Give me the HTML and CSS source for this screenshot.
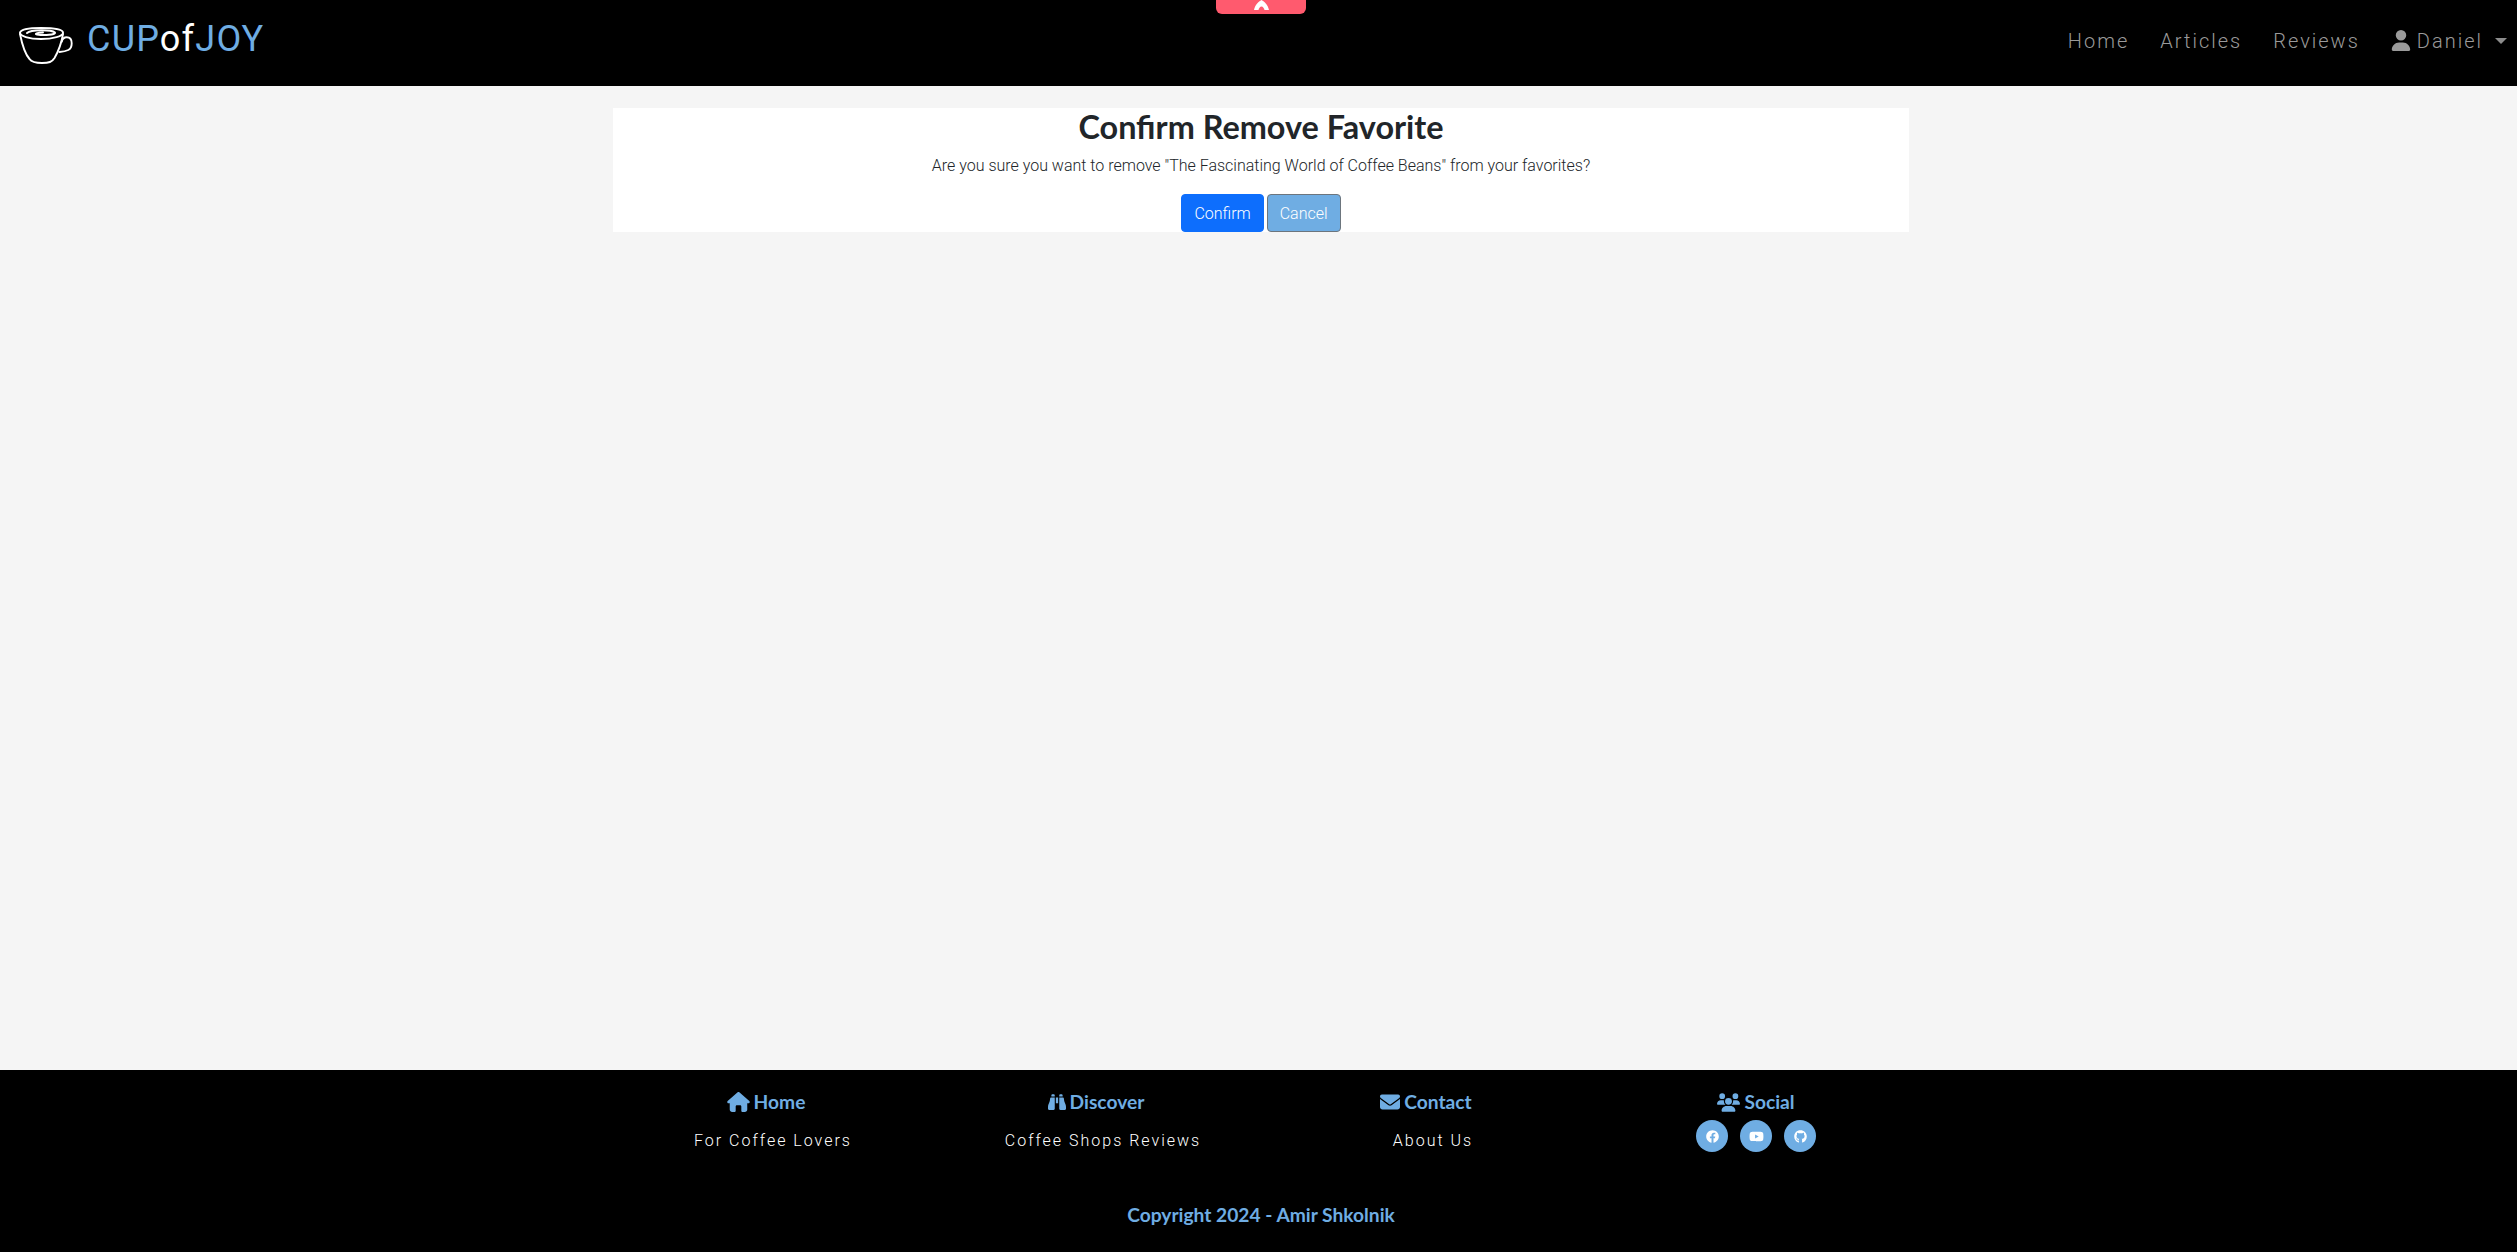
FILE: index.html
```html
<!doctype html>
<html lang="en">
<head>
  <meta charset="utf-8">
  <title>Confirm Remove Favorite</title>
  <link rel="stylesheet" href="styles.css">
</head>

<body>
  <!-- Top navigation -->
  <header class="navbar">
    <a class="brand" href="#">
      <svg class="brand-cup" viewBox="0 0 54 37" width="54" height="37" fill="none" stroke="#fff" stroke-width="1.9" stroke-linecap="round" stroke-linejoin="round">
        <path d="M1 5.500C2 2 12 1 22 1C33 1 43.500 2 44 5.500C44.300 9 34 12 22 12C10 12 .5 9 1 5.500Z"/>
        <path d="M8 6C12 2.500 32 2.500 36 5.500C37 8 25 8.500 18 7.500C15 7 18 5.500 24 5.500"/>
        <path d="M1 7C3 17 6 27 10.500 32C12.500 35 16 36 23 36C30 36 33 35 35.500 31C39 25 42.500 16 44 7"/>
        <path d="M42.700 14.700C43.500 11.500 45.500 10.300 47.700 10.300C51 10.300 52.700 13 52.700 16.300C52.700 19.500 51.500 22 49.300 23C46.500 24.300 43.500 24.700 40.500 25"/>
      </svg>
      <span class="brand-text"><span class="blue">CUP</span>of<span class="blue">JOY</span></span>
    </a>

    <nav class="nav-links">
      <a href="#">Home</a>
      <a href="#">Articles</a>
      <a href="#">Reviews</a>
      <a class="nav-user" href="#">
        <svg viewBox="0 0 448 512" width="20" height="21" fill="currentColor"><path d="M224 256a128 128 0 1 0 0-256 128 128 0 1 0 0 256zm-45.700 48C79.800 304 0 383.800 0 482.300 0 498.700 13.300 512 29.700 512h388.600c16.400 0 29.700-13.300 29.700-29.700C448 383.800 368.200 304 269.700 304h-91.400z"/></svg>
        Daniel
        <span class="caret"></span>
      </a>
    </nav>

    <div class="top-tab">
      <svg viewBox="0 0 15 10" width="15" height="10" fill="#fff"><path d="M7.500 0C10.500 1.500 14 5 15 10H10.500C10.200 8.500 9 6.500 7.500 6.500C6 6.500 4.800 8.500 4.500 10H0C1 5 4.500 1.500 7.500 0Z"/></svg>
    </div>
  </header>

  <main class="content">
    <section class="confirm-box">
      <h2>Confirm Remove Favorite</h2>
      <p>Are you sure you want to remove "The Fascinating World of Coffee Beans" from your favorites?</p>
      <div class="confirm-buttons">
        <button class="btn btn-confirm" type="button">Confirm</button>
        <button class="btn btn-cancel" type="button">Cancel</button>
      </div>
    </section>
  </main>

  <footer class="footer">
    <div class="footer-cols">
      <div class="footer-col">
        <h5>
          <svg viewBox="0 0 576 512" width="23" height="20" fill="currentColor"><path d="M575.800 255.500c0 18-15 32.100-32 32.100h-32l.7 160.200c0 35.300-28.700 64.200-64 64.200H392c-17.700 0-32-14.300-32-32V368c0-17.700-14.300-32-32-32h-80c-17.700 0-32 14.300-32 32v112c0 17.700-14.300 32-32 32h-56.200c-35.300 0-64-28.700-64-64V287.600H32c-18 0-32-14-32-32.100 0-9 3-17 10-24L266.400 8c7-7 15-8 22-8s15 2 21 7l255.400 224.500c8 7 12 15 11 24z"/></svg>
          Home
        </h5>
        <a class="footer-link" href="#">For Coffee Lovers</a>
      </div>
      <div class="footer-col">
        <h5>
          <svg viewBox="0 0 512 512" width="18" height="18" fill="currentColor"><path d="M128 32h32c17.700 0 32 14.300 32 32v32H96V64c0-17.700 14.300-32 32-32zm64 96v320c0 17.700-14.300 32-32 32H32c-17.700 0-32-14.300-32-32v-59.100c0-34.600 9.400-68.600 27.200-98.300C40.900 267.800 49.700 242.400 53 216L60.500 156c2-16 15.600-28 31.800-28H192zm227.800 0c16.100 0 29.800 12 31.800 28L459 216c3.300 26.400 12.100 51.800 25.800 74.600 17.800 29.700 27.200 63.700 27.200 98.300V448c0 17.700-14.300 32-32 32H352c-17.700 0-32-14.300-32-32V128h99.800zM320 64c0-17.700 14.300-32 32-32h32c17.700 0 32 14.300 32 32v32H320V64zm-32 64V288H224V128h64z"/></svg>
          Discover
        </h5>
        <a class="footer-link" href="#">Coffee Shops Reviews</a>
      </div>
      <div class="footer-col">
        <h5>
          <svg viewBox="0 0 512 512" width="20" height="20" fill="currentColor"><path d="M48 64C21.500 64 0 85.500 0 112c0 15.100 7.100 29.300 19.200 38.400L236.800 313.600c11.400 8.500 27 8.500 38.400 0L492.800 150.400c12.100-9.100 19.200-23.300 19.200-38.400 0-26.500-21.500-48-48-48H48zM0 176V384c0 35.300 28.700 64 64 64H448c35.300 0 64-28.700 64-64V176L294.400 339.200c-22.800 17.100-54 17.100-76.800 0L0 176z"/></svg>
          Contact
        </h5>
        <a class="footer-link" href="#">About Us</a>
      </div>
      <div class="footer-col">
        <h5>
          <svg viewBox="0 0 640 512" width="23" height="19" fill="currentColor"><path d="M144 0a80 80 0 1 1 0 160 80 80 0 1 1 0-160zM512 0a80 80 0 1 1 0 160 80 80 0 1 1 0-160zM0 298.700C0 239.800 47.800 192 106.700 192h42.700c15.900 0 31 3.500 44.600 9.700-1.300 7.200-1.900 14.700-1.900 22.300 0 38.200 16.800 72.500 43.300 96H21.300C9.600 320 0 310.400 0 298.700zM405.300 320h-.7c26.600-23.500 43.300-57.800 43.300-96 0-7.600-.7-15-1.900-22.300 13.600-6.300 28.700-9.700 44.600-9.700h42.700C592.200 192 640 239.800 640 298.700c0 11.800-9.600 21.300-21.300 21.300H405.300zM224 224a96 96 0 1 1 192 0 96 96 0 1 1-192 0zM128 485.300C128 411.700 187.700 352 261.300 352h117.300C452.300 352 512 411.700 512 485.300c0 14.700-11.900 26.700-26.700 26.700H154.700c-14.700 0-26.700-11.900-26.700-26.700z"/></svg>
          Social
        </h5>
        <div class="social-icons">
          <a class="social-icon" href="#">
            <svg viewBox="0 0 512 512" width="13" height="13" fill="#fff"><path d="M504 256C504 119 393 8 256 8S8 119 8 256c0 123.800 90.700 226.400 209.300 245V327.700h-63V256h63v-54.600c0-62.200 37-96.500 93.700-96.500 27.100 0 55.500 4.800 55.500 4.800v61h-31.300c-30.800 0-40.400 19.100-40.400 38.700V256h68.800l-11 71.700h-57.800V501C413.300 482.400 504 379.800 504 256z"/></svg>
          </a>
          <a class="social-icon" href="#">
            <svg viewBox="0 0 576 512" width="15" height="13" fill="#fff"><path d="M549.700 124.100c-6.300-23.700-24.800-42.300-48.300-48.600C458.800 64 288 64 288 64S117.200 64 74.600 75.500c-23.500 6.300-42 24.900-48.300 48.600-11.400 42.900-11.400 132.300-11.400 132.300s0 89.400 11.400 132.300c6.300 23.700 24.800 41.500 48.300 47.800C117.200 448 288 448 288 448s170.800 0 213.400-11.500c23.500-6.300 42-24.200 48.300-47.800 11.400-42.900 11.400-132.300 11.400-132.300s0-89.400-11.400-132.300zM232.100 337.600V175.200l142.700 81.200-142.700 81.200z"/></svg>
          </a>
          <a class="social-icon" href="#">
            <svg viewBox="0 0 496 512" width="13" height="13" fill="#fff"><path d="M165.900 397.400c0 2-2.300 3.600-5.200 3.600-3.300.3-5.600-1.300-5.600-3.600 0-2 2.300-3.600 5.200-3.600 3-.3 5.600 1.300 5.600 3.600zM244.800 8C106.100 8 0 113.300 0 252c0 110.900 69.800 205.800 169.500 239.200 12.800 2.300 17.300-5.600 17.300-12.100 0-6.200-.3-40.400-.3-61.400 0 0-70 15-84.700-29.800 0 0-11.400-29.100-27.800-36.600 0 0-22.900-15.700 1.600-15.400 0 0 24.900 2 38.600 25.800 21.900 38.600 58.600 27.500 72.900 20.900 2.300-16 8.800-27.100 16-33.700-55.900-6.200-112.300-14.300-112.300-110.500 0-27.500 7.600-41.300 23.600-58.900-2.600-6.500-11.100-33.300 2.600-67.900 20.900-6.500 69 27 69 27 20-5.600 41.500-8.500 62.800-8.500s42.800 2.900 62.800 8.500c0 0 48.100-33.600 69-27 13.700 34.700 5.200 61.400 2.600 67.900 16 17.700 25.800 31.500 25.800 58.900 0 96.500-58.900 104.200-114.800 110.500 9.200 7.900 17 22.900 17 46.400 0 33.700-.3 75.400-.3 83.600 0 6.500 4.600 14.400 17.300 12.100C428.200 457.800 496 362.900 496 252 496 113.300 383.500 8 244.800 8z"/></svg>
          </a>
        </div>
      </div>
    </div>
    <p class="copyright">Copyright 2024 - Amir Shkolnik</p>
  </footer>
</body>
</html>
```

FILE: styles.css
```css
* {
  box-sizing: border-box;
}

html, body {
  height: 100%;
}

body {
  margin: 0;
  min-height: 100vh;
  display: flex;
  flex-direction: column;
  background-color: #f5f5f5;
  color: #212529;
  font-family: Roboto, sans-serif;
  font-weight: 300;
  font-size: 16px;
}

a {
  text-decoration: none;
}

.blue {
  color: #6fade3;
}

/* navbar */
.navbar {
  position: relative;
  height: 86px;
  flex-shrink: 0;
  display: flex;
  justify-content: space-between;
  background-color: #000;
  padding: 0 10px 0 19px;
}

.brand {
  display: flex;
  align-items: center;
  gap: 14px;
  height: 78px;
  color: #fff;
}

.brand-cup {
  margin-top: 12px;
}

.brand-text {
  font-size: 36px;
  font-weight: 400;
  letter-spacing: 1.2px;
}

.nav-links {
  display: flex;
  align-items: center;
  gap: 31px;
  height: 81px;
}

.nav-links a {
  color: #9a9a9a;
  font-size: 20px;
  letter-spacing: 2px;
}

.nav-user {
  display: flex;
  align-items: center;
  gap: 6px;
}

.caret {
  width: 0;
  height: 0;
  margin-left: 6px;
  border-top: 6px solid #8c8c8c;
  border-left: 6px solid transparent;
  border-right: 6px solid transparent;
}

.top-tab {
  position: absolute;
  top: 0;
  left: 1216px;
  width: 90px;
  height: 14px;
  display: flex;
  justify-content: center;
  background-color: #ff5a6e;
  border-radius: 0 0 6px 6px;
}

/* confirm box */
.content {
  flex: 1;
  padding: 22px 0 0 5px;
}

.confirm-box {
  width: 1296px;
  margin: 0 auto;
  background-color: #fff;
  text-align: center;
}

.confirm-box h2 {
  margin: 0 0 8px;
  font-family: Lato, sans-serif;
  font-size: 32.4px;
  font-weight: 700;
  line-height: 38px;
}

.confirm-box p {
  margin: 0 0 16px;
  line-height: 24px;
}

.confirm-buttons {
  display: flex;
  justify-content: center;
  gap: 3px;
}

.btn {
  height: 38px;
  padding: 0 12px;
  border: 1px solid;
  border-radius: 4px;
  color: #fff;
  font-family: Roboto, sans-serif;
  font-size: 16px;
  font-weight: 300;
}

.btn-confirm {
  background-color: #0d6efd;
  border-color: #0d6efd;
}

.btn-cancel {
  background-color: #6fade3;
  border-color: #6c757d;
}

/* footer */
.footer {
  height: 182px;
  flex-shrink: 0;
  background-color: #000;
  padding: 21px 0 0 5px;
}

.footer-cols {
  display: grid;
  grid-template-columns: repeat(4, 330px);
  justify-content: center;
}

.footer-col {
  display: flex;
  flex-direction: column;
  align-items: center;
  gap: 7px;
}

.footer-col h5 {
  display: flex;
  align-items: center;
  gap: 4px;
  margin: 0;
  color: #6fade3;
  font-family: Lato, sans-serif;
  font-size: 19.2px;
  font-weight: 700;
  line-height: 22px;
}

.footer-link {
  padding: 6px 0 0 14px;
  color: #fff;
  font-size: 16px;
  letter-spacing: 2px;
  line-height: 30px;
}

.social-icons {
  display: flex;
  gap: 12px;
}

.social-icon {
  width: 32px;
  height: 32px;
  display: flex;
  align-items: center;
  justify-content: center;
  background-color: #6fade3;
  border-radius: 50%;
}

.copyright {
  margin: 47px 0 0;
  color: #6fade3;
  font-family: Lato, sans-serif;
  font-size: 19.2px;
  font-weight: 700;
  line-height: 24px;
  text-align: center;
}
```
